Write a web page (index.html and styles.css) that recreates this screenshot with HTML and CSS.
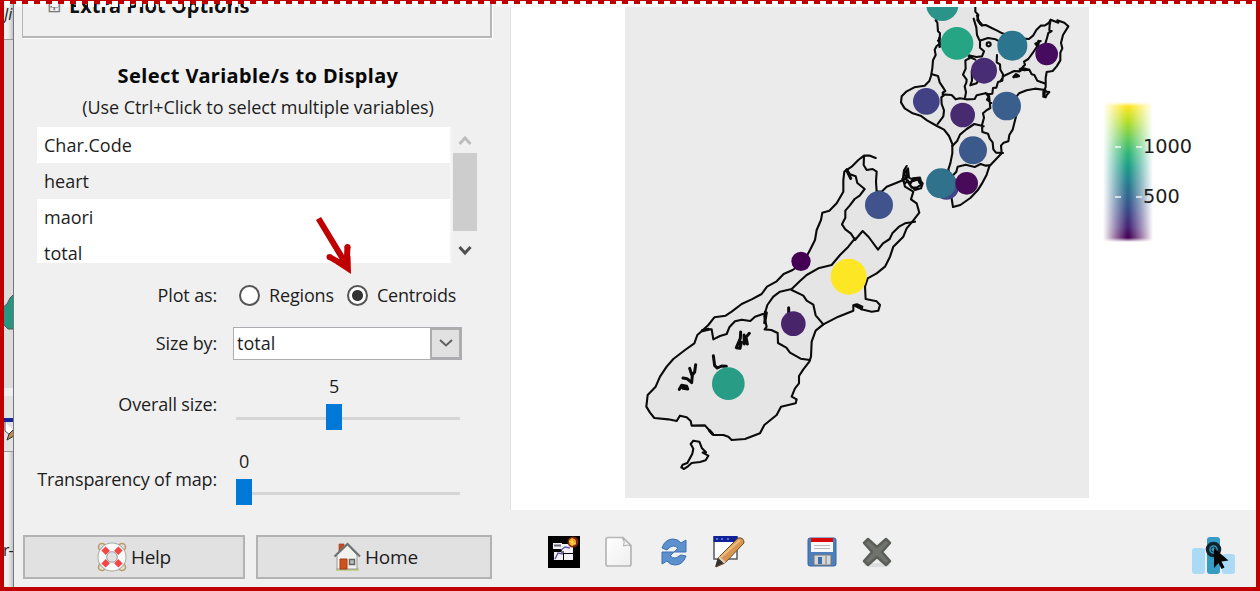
FILE: index.html
```
<!DOCTYPE html>
<html lang="en">
<head>
<meta charset="utf-8">
<title>Map plot options</title>
<link rel="stylesheet" href="styles.css">
</head>
<body>
<div class="app">
  <aside class="behind">
    <div class="behind-head"><i>Ji</i></div>
    <div class="behind-map"><svg width="10" height="340" viewBox="0 0 10 340"><path d="M-2 268 L3 264 L6 258 L12 252 V289 H4 L-2 283Z" fill="#279680" stroke="#555"/></svg></div>
    <div class="behind-tool"><svg width="10" height="54" viewBox="0 0 10 54"><path d="M0 20h10v4H0z" fill="#16269a"/><path d="M1 24v9l5 4 4-4" fill="#fff" stroke="#555"/><path d="M3 42l2-6 5-5v7z" fill="#b98b56" stroke="#333"/></svg></div>
    <div class="behind-foot">r-</div>
  </aside>

  <section class="panel">
    <div class="extra"><span class="expander">⊞</span><b class="extra-title">Extra Plot Options</b></div>
    <h1 class="title"><span>Select Variable/s to Display</span></h1>
    <p class="hint"><span>(Use Ctrl+Click to select multiple variables)</span></p>
    <div class="listbox">
      <ul class="list">
        <li>Char.Code</li><li class="alt">heart</li><li>maori</li><li>total</li>
      </ul>
      <div class="scroll">
        <svg width="24" height="26" viewBox="0 0 24 26"><path d="M6.500 17 12 11 17.500 17" fill="none" stroke="#bdbdbd" stroke-width="3"/></svg>
        <div class="thumb"></div>
        <svg width="24" height="32" viewBox="0 0 24 32"><path d="M6.500 16 12 22 17.500 16" fill="none" stroke="#505050" stroke-width="3"/></svg>
      </div>
    </div>
    <div class="row plot-row">
      <label class="lab">Plot as:</label>
      <span class="radio"></span><span class="regions">Regions</span>
      <span class="radio on"></span><span class="centroids">Centroids</span>
    </div>
    <div class="row size-row">
      <label class="lab">Size by:</label>
      <div class="select"><span>total</span><div class="drop"><svg width="16" height="10" viewBox="0 0 16 10"><path d="M2 2l6 5.500L14 2" fill="none" stroke="#606060" stroke-width="2"/></svg></div></div>
    </div>
    <div class="row slider-row">
      <label class="lab">Overall size:</label>
      <div class="slider"><div class="value v5">5</div><div class="track"><div class="knob k5"></div></div></div>
    </div>
    <div class="row slider-row">
      <label class="lab">Transparency of map:</label>
      <div class="slider"><div class="value">0</div><div class="track"><div class="knob"></div></div></div>
    </div>
    <div class="buttons">
      <button class="btn help">
        <svg width="30" height="30" viewBox="0 0 30 30"><g fill="none" stroke="#b99a61" stroke-width="1.500"><circle cx="5" cy="5" r="3.500"/><circle cx="25" cy="5" r="3.500"/><circle cx="5" cy="25" r="3.500"/><circle cx="25" cy="25" r="3.500"/></g><circle cx="15" cy="15" r="9.700" fill="none" stroke="#aaa" stroke-width="9.500"/><circle cx="15" cy="15" r="9.500" fill="none" stroke="#fafafa" stroke-width="8"/><path d="M10.800 10.800 6.500 6.500M19.200 10.800 23.500 6.500M10.800 19.200 6.500 23.500M19.200 19.200 23.500 23.500" stroke="#f34646" stroke-width="6"/><circle cx="15" cy="15" r="5.300" fill="none" stroke="#aaa"/></svg><span>Help</span>
      </button>
      <button class="btn home">
        <svg width="28" height="30" viewBox="0 0 28 30"><path d="M3 27.500h23" stroke="#b9cb78" stroke-width="2.500"/><path d="M6 2h5v8H6z" fill="#ce4a1b" stroke="#8d4a35" stroke-width=".7"/><path d="M4 13 14.500 3 24 13v14H4z" fill="#f2f2ef" stroke="#999"/><path d="M1.500 14.500 14.500 2 27 14.500" fill="none" stroke="#6e7371" stroke-width="2"/><path d="M7 17h7v10H7z" fill="#d1511d" stroke="#a33c17"/><path d="M16.500 17.500h5v5h-5z" fill="#b9c0be" stroke="#666" stroke-width="1.500"/></svg><span>Home</span>
      </button>
    </div>
    <svg class="arrow" width="40" height="60" viewBox="0 0 40 60"><path d="M4.500 3.500 32 49M15.500 42l17 9.500 1-20" fill="none" stroke="#c00000" stroke-width="6"/><circle cx="15.500" cy="42" r="3" fill="#c00000"/><circle cx="33.500" cy="32" r="3" fill="#c00000"/><path d="M22 49l15 10-.500-18z" fill="#c00000"/></svg>
  </section>

  <main class="main">
    <div class="plot">
      <svg class="map" width="464" height="491" viewBox="625 7 464 491">
        <rect x="625" y="7" width="464" height="491" fill="#ebebeb"/>
        <g fill="none" stroke="#0b0b0b" stroke-width="6.300" stroke-linejoin="round" stroke-linecap="round">
          <g transform="translate(880 0) scale(.33333)">
            <path fill="#e5e5e5" d="M175 0V55L167 61 172 68 174 94 180 100 179 117 174 122 181 130 170 138 164 149 167 165 159 181 157 205 153 228 148 243 134 257 103 262 80 274 65 289 63 307 74 325 98 340 122 347 141 361 171 378 192 389 207 408 217 432 217 460 211 490 205 508 215 550 214 590 219 621 241 615 271 594 293 571 308 547 320 524 328 499 345 481 365 460 363 437 371 428 385 424 388 405 398 389 403 369 409 346 414 310 402 299 417 280 440 271 465 266 496 270 498 275 508 276 500 285 497 292 490 290 490 275 497 262 497 234 500 216 518 213 530 199 541 181 541 158 547 145 543 129 549 105 565 79 553 68 532 61 535 68 512 59 506 69 495 76 482 77 469 90 460 106 447 117 419 115 390 108 367 100 350 91 335 84 317 75 305 76 292 60 295 45 286 35 286 0"/>
            <path d="M291 47l9 25M281 56l8 27 2 22 8 17 25-8 23 4 18 10M300 120v23l12 11-6 15-17 2-23-5 4 8-14 7 1 25-8 18 11 15-1 9-5 11 4 18-3 15M266 170l20 9M351 165l-1 22 10 6 1 16 8 14-2 19-13 4-5 17-10 1-2 17-12 2-9-4M156 223l18 5 5 19 10 15 7 11-8 5 3 8-7 6 1 20 7 19-2 18-9 12-8 11M188 283l27 2 12 13 13-3 19 3 25-1 6-11 27-6 10 5 4 39-13 8-9 8 3 13-6 22 1 21 17 5 5 15 9 11 2 21 8 10 21 1M217 438l15-16 8-18 20-17 23-15 28 7M215 530l14-15 4-15 24-6 27 7 18-9 15 5 11-1M431 205l17 4 7 14 8 2 9 17 21 8M431 205l-12 9-16-1-9 4-23 11-10 16M512 60l-3 15-1 16 7 2-10 6-4 15-5 16M482 123l-16 8 6 8-11 16-16 22-13 8 3 9-15 16M419 207l14 4 14-2M291 186l-16 27 1 29-5 14 19-6 4-8M318 280l8 11-5 8 13 10"/>
            <circle cx="326" cy="133" r="6"/><path d="M401 231l7-8 8 5-8 2M297 65l9 10M178 115l1 25M476 123l-2 15M493 270v17" stroke-width="8"/>
          </g>
          <g transform="translate(625 280) scale(.33333)">
            <path fill="#e5e5e5" d="M752-366 735-373H717L700-360 680-340 658-325 655-300V-265L635-230 613-208 592-202 588-180 575-150 570-120 555-90 547-75 520-42 503-30 476-18 455 4 426 20 410 42 380 58 350 72 320 95 302 107 268 112 250 135 234 150 217 165 208 190 180 210 145 237 125 260 105 290 92 320 68 345 64 380 75 398 88 414 130 418 155 423 165 407 185 412 197 423 200 437 240 436 252 450 265 465 295 465 310 470 320 480 360 477 405 460 418 435 455 405 468 380 512 370 515 358 500 350 510 325 522 310 522 288 535 268 553 245 558 230 560 185 572 152 595 133 640 110 685 92 685 76 696 73 712 80 709 88 740 95 760 92 765 75 755 64 722 57 720 20 728-5 755-20 780-40 795-70 805-100 835-130 845-155 862-175 883-202 875-230 858-242 865-265 840-280 835-300 815-292 785-280 770-265 755-265 753-295 755-325 743-333 725-330 716-345 717-370"/>
            <path d="M665-332l10 15 17 6 5 20 22 18-15 20-15 10-15 20-13 15v21l-10 20 10 15 17 13 12 19 23-27 18 18 28 38 15-19 20-13 8-17 20-20 18-10 30-5M690-125l-20 25-25 25-25 30-40 10-35 20-20 18-25 24-35 8-20 15-18 25-7 25-30 10-14 13-26-4-20 5-17 18-8 20-20 6-20 10-5-30-12 0-16 2M500 30l35 17 10 15 20 12 7 32 23 27M420 95l-2 15 7 30-6 8 20 2 19 9 1 30 25 14 11 15 32 18 28 4M205 482l18 3 8 20 12 12-10 1 17 9-8 14-17 5-25 3-11 10-12 8-8-5 4-8 14-5 15-28 3-15-8-14zM838-320l8 20 10 10 12-15 13 0 12 15-5 15-18 5-15-15 8-20 22-2 5 20-15 10-15 0-10-15 30-10M845-342l-8 13-3 23 15 8-9 8-8-13 16-5-3-18M835-315l14-20 3 28 16 8 10-4 6 12 8 2"/>
            <path d="M347 156l-1 19-12 28 11 2 4-18M373 160l-10 12 4 20M357 165l1 27M265 227l4 30 8 7 13-6 14 1M212 254l-3 22-7 9-2 23-14-12-12-2M194 265l8 25M163 328l7-12 15 3 3 8-14-2M491 83v20M254 452l8 9M690 76l20 10M424 98l-5 30M665-330l12 25M232 152l18-4" stroke-width="9"/>
          </g>
        </g>
        <g transform="translate(880 0) scale(.33333)">
          <circle cx="187" cy="15" r="48" fill="#2a938a"/><circle cx="231" cy="130" r="49" fill="#25a584"/><circle cx="397" cy="137" r="45" fill="#2b768e"/><circle cx="500" cy="162" r="34" fill="#460b5e"/><circle cx="312" cy="212" r="39" fill="#482d74"/><circle cx="139" cy="304" r="40" fill="#424186"/><circle cx="248" cy="345" r="37" fill="#482a70"/><circle cx="380" cy="318" r="43" fill="#3a5f8d"/><circle cx="279" cy="451" r="42" fill="#3c598b"/><circle cx="199" cy="561" r="38" fill="#414487"/><circle cx="183" cy="550" r="45" fill="#30718c"/><circle cx="260" cy="550" r="34" fill="#470b5a"/>
        </g>
        <g transform="translate(625 280) scale(.33333)">
          <circle cx="762" cy="-225" r="42" fill="#40538c"/><circle cx="528" cy="-56" r="29" fill="#440154"/><circle cx="671" cy="-10" r="54" fill="#fde725"/><circle cx="505" cy="131" r="37" fill="#48256b"/><circle cx="310" cy="311" r="49" fill="#299c86"/>
        </g>
      </svg>
      <div class="legend">
        <div class="bar"></div>
        <div class="ticks"><div class="tick"><i></i><i></i><span>1000</span></div><div class="tick"><i></i><i></i><span>500</span></div></div>
      </div>
    </div>
    <div class="toolbar">
      <svg class="t1" width="32" height="32" viewBox="0 0 32 32"><path d="M0 0h32v32H0z" fill="#000"/><path d="M5 7h9v6H5zM14 8h11v9H14zM6 16h9v8H6zM16 18h9v6h-9z" fill="#f3f0f5"/><path d="M6 9.500h7M13 16h3" stroke="#667" stroke-width="2"/><path d="M7 23l3-6 5 1M13 14l4-3 5 1" fill="none" stroke="#655ca8" stroke-width="1.500"/><circle cx="25" cy="6" r="5.500" fill="#7a250b"/><circle cx="24.500" cy="6" r="3.500" fill="#f5a623"/><path d="M24 2v8M21 5l7 3" stroke="#ffda57"/></svg>
      <svg class="t2" width="30" height="34" viewBox="0 0 30 34"><defs><linearGradient id="pg" x2="1" y2="1"><stop stop-color="#fff"/><stop offset="1" stop-color="#eee"/></linearGradient></defs><path d="M4 2.500h15l8 8V29q0 2-2 2H4q-2 0-2-2V4.500q0-2 2-2z" fill="url(#pg)" stroke="#b5b5b5" stroke-width="1.700"/><path d="M18.500 3q3 4 1 8 4-2 7.500 0z" fill="#f8f8f8" stroke="#aaa"/></svg>
      <svg class="t3" width="28" height="32" viewBox="0 0 28 32"><g fill="#5d91cd" stroke="#3b70b1" stroke-linejoin="round"><path d="M2 12Q5 3 13 3q5 0 8 4l5-3v12H14l4-4q-5-4-9 0l-2 2z"/><path d="M26 20Q23 29 15 29q-5 0-8-4l-5 3V16h12l-4 4q5 4 9 0l2-1z"/></g></svg>
      <svg class="t4" width="34" height="34" viewBox="0 0 34 34"><path d="M2 2h23v22H2z" fill="#fff" stroke="#56585c" stroke-width="1.500"/><path d="M1.500 1h24v6h-24z" fill="#10229a"/><path d="M4 4h2m3 0h2m4 0h2" stroke="#6f87e1" stroke-width="1.500"/><path d="M4 32l2-9L26 3q6-1 6 5L13 28z" fill="#d69650" stroke="#6c4b32"/><path d="M9 22 28 5" stroke="#efbd7e" stroke-width="2"/><path d="M3 32l3-9 6 5z" fill="#333"/><path d="M7 22l6 6" stroke="#ddd0bd" stroke-width="2"/></svg>
      <svg class="t5" width="32" height="32" viewBox="0 0 32 32"><rect x="2" y="2" width="28" height="28" rx="2" fill="#4c80bd" stroke="#3566a2"/><path d="M5 2h22v14H5z" fill="#f8f8f8"/><path d="M5 2h22v4H5z" fill="#d90909"/><path d="M8 9.500h16M8 12.500h16" stroke="#bbb"/><path d="M8 19h17v10H8z" fill="#d6d8d6" stroke="#777"/><path d="M12 21h4v7h-4z" fill="#3f6eaa"/><path d="M20 20v9" stroke="#aaa" stroke-width="2"/></svg>
      <svg class="t6" width="32" height="32" viewBox="0 0 32 32"><ellipse cx="16" cy="29" rx="13" ry="2" fill="#ddd"/><path d="M3 7l4-4 9 8 9-8 4 4-8 9 8 9-4 4-9-8-9 8-4-4 8-9z" fill="#71736f" stroke="#5c5e5a" stroke-width="2.500" stroke-linejoin="round"/></svg>
      <svg class="t7" width="46" height="40" viewBox="0 0 46 40"><rect x="1" y="12" width="13" height="26" rx="3" fill="#abdaf4"/><rect x="31" y="18" width="13" height="20" rx="3" fill="#abdaf4"/><rect x="16" y="1" width="13" height="37" rx="3" fill="#369bc5"/><circle cx="22.500" cy="13.500" r="6" fill="none" stroke="#10242d" stroke-width="3.500"/><circle cx="22.500" cy="13.500" r="2.500" fill="none" stroke="#10242d"/><path d="M23 12v20l4.500-5 3 6 3-1.500-3-6 7-1z" fill="#050505"/></svg>
    </div>
  </main>
  <div class="frame"></div>
  <div class="dashes"></div>
</div>
</body>
</html>
```
FILE: styles.css
```
* { box-sizing: border-box; }
body { margin: 0; background: #f0f0f0; font-family: "Open Sans", "Noto Sans", sans-serif; font-size: 18px; line-height: 24px; letter-spacing: -0.15px; color: #1d1d1d; overflow: hidden; }
svg { display: block; flex: none; }
.app { position: relative; width: 1260px; height: 591px; display: flex; padding-left: 4px; overflow: hidden; }
.frame { position: absolute; inset: 0; border: 4px solid #c00000; }
.dashes { position: absolute; left: 4px; right: 4px; top: 1px; height: 6px; background: repeating-linear-gradient(90deg, #fff 0 6px, transparent 6px 12px); }

.behind { width: 10px; background: #f0f0f0; border-right: 1px solid #777; box-shadow: inset -4px 0 4px -2px #bbb; overflow: hidden; }
.behind > div { overflow: hidden; }
.behind-head { height: 40px; border-bottom: 1px solid #999; padding-top: 2px; font-size: 16px; }
.behind-map { height: 348px; background: #dcdcdc; }
.behind-tool { height: 64px; padding-top: 10px; background: #e2e2e2; border-top: 8px solid #efefef; border-bottom: 1px solid #999; }
.behind-tool svg { margin-top: -8px; }
.behind-foot { height: 139px; padding-top: 86px; font-size: 16px; letter-spacing: -1px; text-indent: -1px; }

.panel { position: relative; width: 496px; height: 587px; display: flex; flex-direction: column; padding: 0 0 0 9px; background: #f0f0f0; }
.extra { width: 470px; height: 38px; margin-left: -1px; display: flex; border: 1px solid #b6b6b6; border-width: 0 2px 2px 1px; box-shadow: 1px 1px #fff; padding: 0 0 0 24px; overflow: hidden; }
.expander { width: 22px; height: 20px; margin-top: -6px; font-family: "DejaVu Sans", sans-serif; font-size: 17px; color: #777; }
.extra-title { margin-top: -6px; font-family: "Noto Sans", sans-serif; font-size: 20px; letter-spacing: 0; color: #111; }
.title { margin: 25px 0 0; height: 26px; width: 470px; text-align: center; font-family: "Noto Sans", sans-serif; font-size: 20px; line-height: 26px; letter-spacing: 0.4px; color: #080808; white-space: nowrap; }
.hint { margin: 6px 0 0; height: 24px; width: 470px; text-align: center; letter-spacing: -0.05px; white-space: nowrap; }
.listbox { display: flex; justify-content: space-between; width: 440px; height: 136px; margin: 8px 0 0 14px; }
.list { width: 415px; height: 136px; margin: 0; padding: 0; list-style: none; overflow: hidden; background: #fff; border-right: 2px solid #f5f5f5; letter-spacing: 0; }
.list li { height: 36px; padding: 6px 7px; }
.list .alt { background: #f0f0f0; }
.scroll { width: 24px; }
.thumb { height: 78px; background: #cdcdcd; }
.row { display: flex; width: 487px; }
.lab { width: 194px; margin-right: 19px; text-align: right; white-space: nowrap; }
.plot-row { height: 24px; margin-top: 20px; align-items: center; }
.radio { width: 21px; height: 21px; margin-left: 3px; border: 2px solid #555; border-radius: 50%; background: #fff; }
.on { margin-left: 12px; background: radial-gradient(circle, #333 0 5px, #fff 6px); }
.regions { width: 66px; margin-left: 9px; }
.centroids { margin-left: 9px; letter-spacing: -0.25px; }
.size-row { height: 34px; margin-top: 19px; align-items: center; }
.select { width: 229px; height: 33px; margin-left: -3px; display: flex; align-items: center; justify-content: space-between; background: #fff; border: 1px solid #abadb3; padding-left: 3px; letter-spacing: 0; }
.drop { width: 31px; height: 31px; background: #e1e1e1; border: 2px solid #adadad; display: flex; align-items: center; justify-content: center; }
.slider-row { height: 75px; }
.slider-row .lab { padding-top: 32px; }
.slider { width: 224px; }
.value { width: 16px; height: 24px; margin-top: 14px; text-align: center; }
.v5 { margin-left: 90px; }
.track { height: 26px; margin-top: 6px; background: linear-gradient(#d6d6d6, #d6d6d6) 0 13px / 100% 3px no-repeat; }
.knob { width: 16px; height: 26px; background: #0078d7; }
.k5 { margin-left: 90px; }
.buttons { display: flex; gap: 11px; margin-top: 25px; }
.btn { height: 44px; display: flex; align-items: center; justify-content: center; gap: 4px; padding: 0 0 1px; border: 2px solid #b3b3b3; background: #e1e1e1; font: 19px/26px "Open Sans", sans-serif; letter-spacing: -0.3px; color: #1d1d1d; }
.help { width: 222px; }
.home { width: 236px; letter-spacing: -0.2px; padding-left: 3px; }
.arrow { position: absolute; left: 300px; top: 215px; }

.main { width: 746px; height: 587px; }
.plot { height: 510px; display: flex; background: #fff; border-left: 1px solid #e2e2e2; padding: 7px 0 0 114px; }
.legend { margin: 95px 0 0 14px; display: grid; height: 140px; width: 100px; }
.bar { grid-area: 1 / 1; width: 52px; height: 140px; margin-left: -1px; background: linear-gradient(#fde725 3%, #b5de2b 14%, #6ece58 25%, #35b779 36%, #1f9e89 46%, #26828e 56%, #31688e 67%, #3e4989 78%, #482878 89%, #440154 97%); -webkit-mask: linear-gradient(90deg, transparent 2%, #0008 25%, #000 48%, #000 52%, #0008 75%, transparent 98%), linear-gradient(transparent, #000 3%, #000 97%, transparent); -webkit-mask-composite: source-in; mask-composite: intersect; }
.ticks { grid-area: 1 / 1; z-index: 1; padding-top: 33px; }
.tick { height: 50px; display: flex; align-items: flex-start; font: 19.3px/24px "DejaVu Sans", sans-serif; letter-spacing: 0; }
.tick i { width: 6px; height: 1.500px; margin: 11px 0 0 12px; background: #fffa; }
.tick i + i { margin-left: 15px; }
.tick span { margin-left: 1px; }
.toolbar { height: 77px; display: flex; align-items: center; padding-top: 7px; }
.t1 { margin-left: 38px; }
.t2 { margin-left: 24px; }
.t3 { margin-left: 26px; }
.t4 { margin-left: 24px; }
.t5 { margin-left: 60px; }
.t6 { margin-left: 23px; }
.t7 { margin: 8px 0 0 298px; }
```
